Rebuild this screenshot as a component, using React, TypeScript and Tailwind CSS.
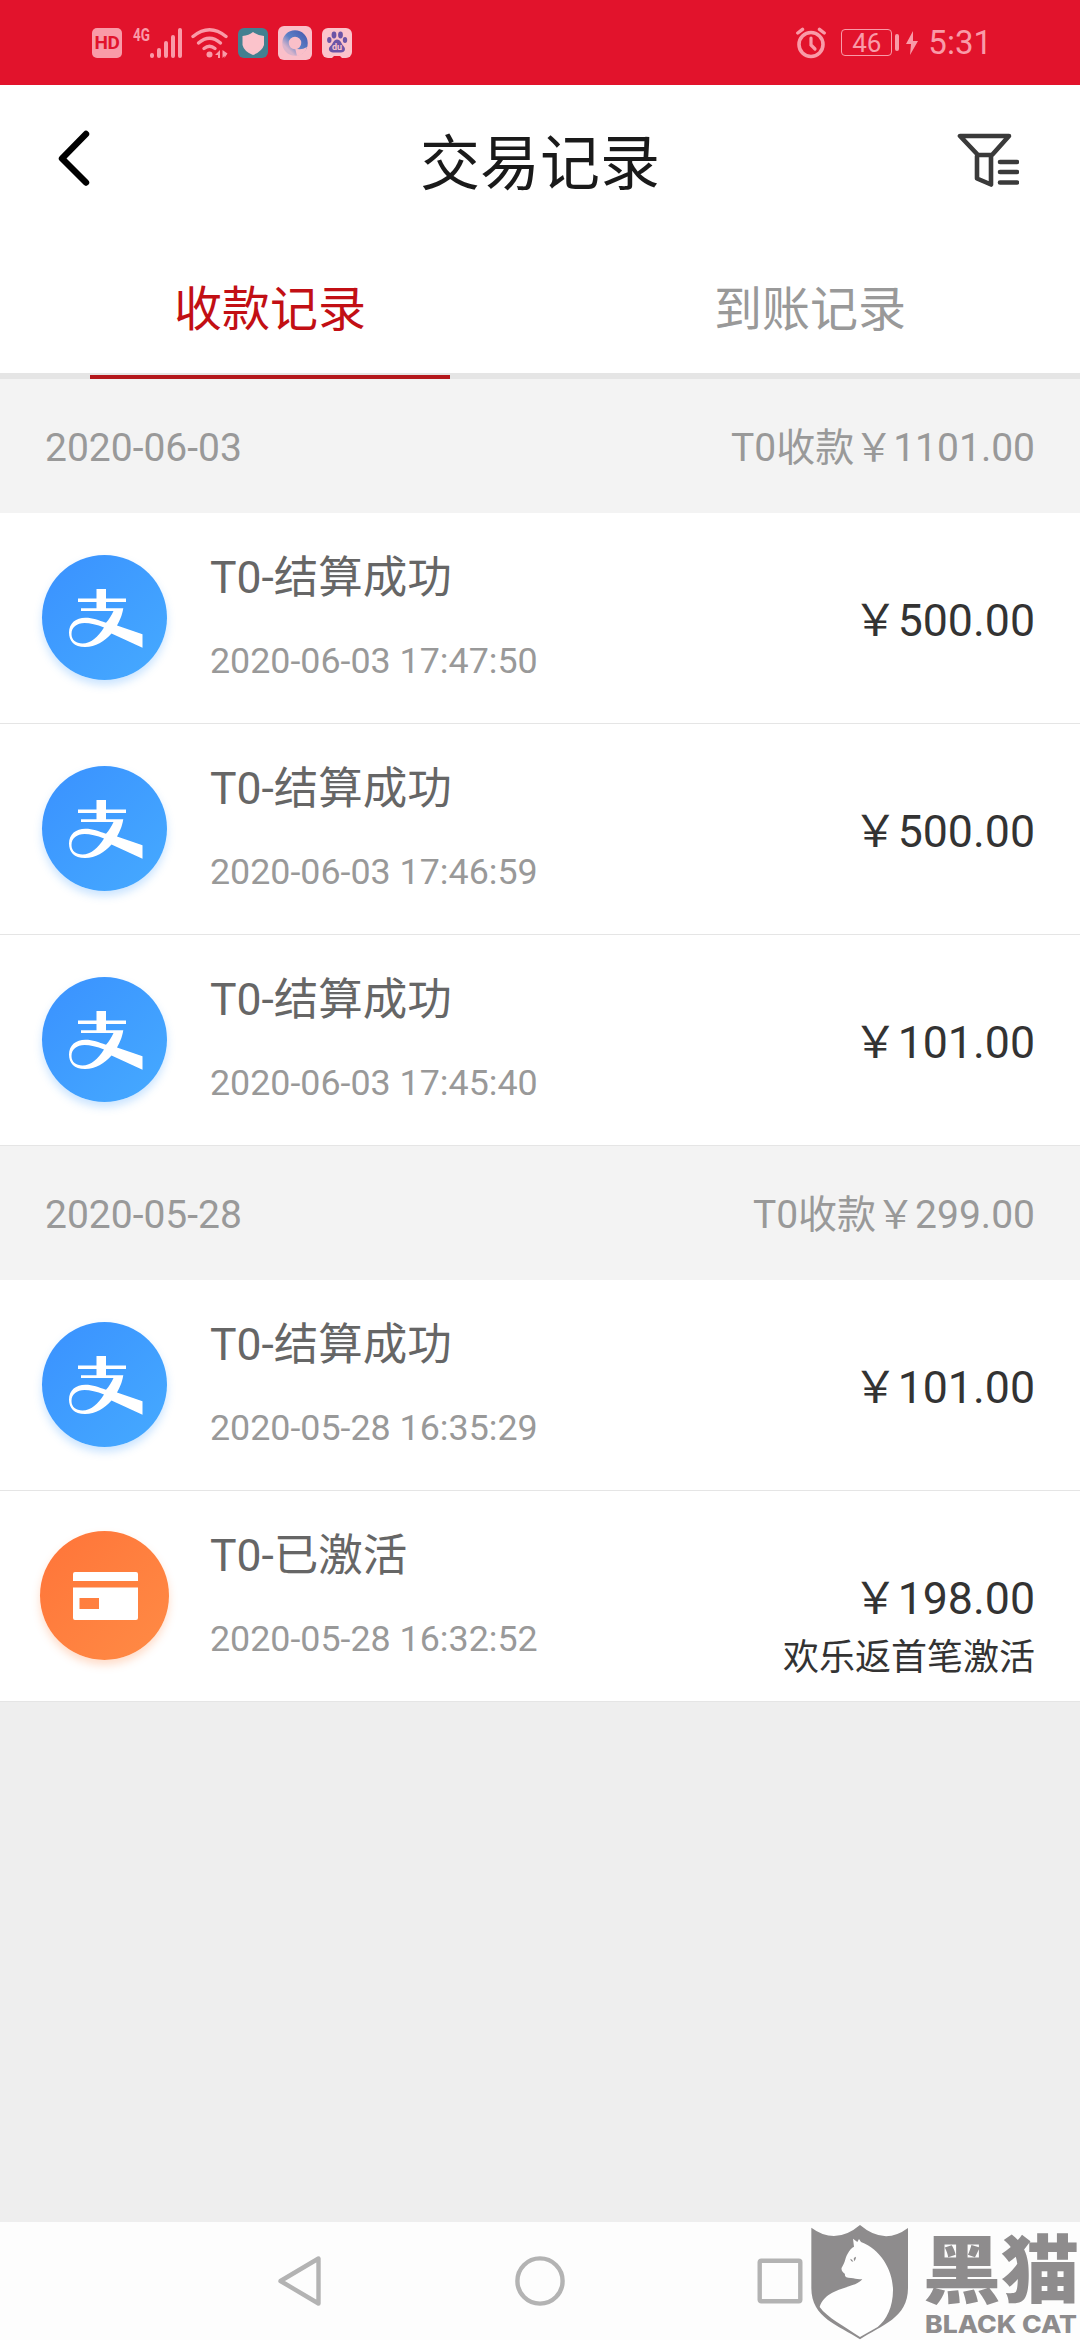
import React, { useState } from 'react';

type Channel = 'alipay' | 'card';

interface TradeRecord {
  channel: Channel;
  title: string;
  time: string;
  amount: string;
  note?: string;
}

interface DayGroup {
  date: string;
  total: string;
  records: TradeRecord[];
}

const TABS = ['收款记录', '到账记录'];

const GROUPS: DayGroup[] = [
  {
    date: '2020-06-03',
    total: 'T0收款￥1101.00',
    records: [
      { channel: 'alipay', title: 'T0-结算成功', time: '2020-06-03 17:47:50', amount: '￥500.00' },
      { channel: 'alipay', title: 'T0-结算成功', time: '2020-06-03 17:46:59', amount: '￥500.00' },
      { channel: 'alipay', title: 'T0-结算成功', time: '2020-06-03 17:45:40', amount: '￥101.00' },
    ],
  },
  {
    date: '2020-05-28',
    total: 'T0收款￥299.00',
    records: [
      { channel: 'alipay', title: 'T0-结算成功', time: '2020-05-28 16:35:29', amount: '￥101.00' },
      { channel: 'card', title: 'T0-已激活', time: '2020-05-28 16:32:52', amount: '￥198.00', note: '欢乐返首笔激活' },
    ],
  },
];

const SignalIcons = () => (
  <div className="flex items-center">
    <div className="flex h-[30px] w-[30px] items-center justify-center rounded-[5px] bg-[#f99ba8] text-[19px] font-bold leading-none tracking-tight text-[#e2132c]">
      HD
    </div>
    <svg className="ml-[11px]" width="50" height="40" viewBox="0 -3 50 40">
      <text x="0" y="15" fontSize="18" fontWeight="700" textLength="17" lengthAdjust="spacingAndGlyphs" fill="#f99ba8">4G</text>
      <g stroke="#f99ba8" strokeWidth="4" strokeLinecap="round">
        <path d="M19 29v1M26 24v6M33 17v13M40 11v19M47 4v26" />
      </g>
    </svg>
    <svg className="ml-[8px]" width="38" height="34" viewBox="0 0 38 34">
      <g fill="none" stroke="#f99ba8" strokeWidth="3.4" strokeLinecap="round">
        <path d="M2 10.500Q18.500 -3 35 10.500" />
        <path d="M7.500 17Q18.500 7.500 29.500 17" />
        <path d="M13 22.500Q18.500 18 24 22.500" />
      </g>
      <circle cx="18.500" cy="28.500" r="3" fill="#f99ba8" />
      <path d="M29 24v8h-2v-3h-3zM31.500 32v-8l5 3.500-3 4.500v-2z" fill="#f99ba8" />
    </svg>
    <svg className="ml-[9px]" width="30" height="30" viewBox="0 0 30 30">
      <rect width="30" height="30" rx="6" fill="#438090" />
      <path d="M15 4Q20 7.500 26 8v9q-2 6.500-11 10Q6 23.500 4.500 17V8Q11 7.500 15 4z" fill="#fbc3cb" />
    </svg>
    <svg className="ml-[10px]" width="34" height="34" viewBox="0 0 34 34">
      <defs>
        <linearGradient id="ring" x1="0" y1="1" x2="1" y2="0">
          <stop offset="0.15" stopColor="#d9b4cb" />
          <stop offset="0.5" stopColor="#5c80c6" />
          <stop offset="1" stopColor="#4a5fb2" />
        </linearGradient>
      </defs>
      <rect width="34" height="34" rx="6" fill="#fabfc9" />
      <circle cx="17" cy="17" r="9.500" fill="none" stroke="url(#ring)" strokeWidth="6.500" />
      <path d="M17 22q5 3 12-1-2 8-10 9z" fill="#fabfc9" />
    </svg>
    <svg className="ml-[10px]" width="30" height="30" viewBox="0 0 30 30">
      <rect width="30" height="30" rx="6" fill="#fbc3cb" />
      <g fill="#6c54a6">
        <ellipse cx="12" cy="7" rx="2.400" ry="3.400" />
        <ellipse cx="18.500" cy="7" rx="2.400" ry="3.400" />
        <ellipse cx="7.300" cy="12" rx="2.200" ry="3" />
        <ellipse cx="23" cy="12" rx="2.200" ry="3" />
        <path d="M15 11.500c4 0 4 4 6.500 6.500 3 3 1 6.500-2.500 6.500h-8c-4 0-5.500-4-2.500-6.500C11 16 11.500 11.500 15 11.500z" />
      </g>
      <text x="15" y="22" fontSize="9" fontWeight="700" textAnchor="middle" fill="#fbc3cb">du</text>
      <path d="M10 30l2-2h6l2 2z" fill="#e2132c" />
    </svg>
  </div>
);

const BatteryAndClock = () => (
  <div className="flex items-center text-[#f99ba8]">
    <svg width="30" height="32" viewBox="0 0 30 32" fill="none" stroke="currentColor" strokeLinecap="round">
      <circle cx="15" cy="17.500" r="12" strokeWidth="3.600" />
      <path d="M15 11v7l4 4" strokeWidth="3.200" />
      <path d="M1.800 6l4.700-3.600M28.200 6l-4.700-3.600" strokeWidth="3.400" />
    </svg>
    <div className="ml-[15px] flex h-[27px] w-[51px] items-center justify-center rounded-[4px] border border-current text-[26px] leading-none">
      46
    </div>
    <div className="ml-[3px] h-[17px] w-[4px] rounded-full bg-current" />
    <svg className="ml-[7px]" width="12" height="24" viewBox="0 0 12 24">
      <path d="M7 0L0 13h5l-1 11 8-14H7z" fill="currentColor" />
    </svg>
    <span className="ml-[10px] text-[33px] leading-none">5:31</span>
  </div>
);

const BackIcon = () => (
  <svg width="36" height="60" viewBox="0 0 36 60" fill="none" stroke="#000" strokeWidth="6.400" strokeLinecap="round" strokeLinejoin="round">
    <path d="M31 5L7 29.500l24 24" />
  </svg>
);

const FilterIcon = () => (
  <svg width="62" height="56" viewBox="0 0 62 56" fill="none" stroke="#3a3a3a" strokeWidth="4.600" strokeLinecap="round" strokeLinejoin="round">
    <path d="M3 5h49L35 24H21zM20 25v22.500l14 6V25" />
    <path d="M43 31h17M43 41h17M43 51.500h17" />
  </svg>
);

const AlipayIcon = () => (
  <div className="h-[125px] w-[125px] rounded-full bg-linear-to-br from-[#3a91ff] to-[#46aaff] shadow-[0_5px_9px_rgba(64,158,255,0.28)]">
    <svg width="125" height="125" viewBox="0 0 125 125" fill="#fff">
      <path d="M54.500 34H64v9.500h20V47H64v6.300h17.300C80 61 77.500 66 75 70.500l25.500 8.800v13.400L69.500 78.500C62 86.500 54 92 43 92 32 92 27 86 27 77.500 27 68 34 62.700 43.400 62.700c7.600 0 13 2.500 20.600 5 3-3.200 5.500-7.200 7.500-11.700H39v-2.700h15.500V47H36v-3.500h18.500zM62 72.500C55 69.500 48 68 42.500 68 35 68 29.500 72 29.500 79c0 6 4.500 9.500 11 9.500C49 88.500 56 82 62 72.500z" fillRule="evenodd" />
    </svg>
  </div>
);

const CardIcon = () => (
  <div className="h-[129px] w-[129px] rounded-full bg-linear-to-br from-[#ff7439] to-[#ff8b45] shadow-[0_5px_9px_rgba(255,128,60,0.28)]">
    <svg width="129" height="129" viewBox="0 0 129 129">
      <path d="M35 41h61q2 0 2 2v7H33v-7q0-2 2-2zM33 56.500h65V87q0 2-2 2H35q-2 0-2-2zM39.500 67v11H59V67z" fill="#fff" fillRule="evenodd" />
    </svg>
  </div>
);

const RecordRow: React.FC<{ record: TradeRecord }> = ({ record }) => (
  <li className="flex h-[211px] border-b border-[#e5e5e5] bg-white pl-10 pr-[45px]">
    <div className="flex w-[130px] items-center justify-center pb-[2px] pr-[1px]">
      {record.channel === 'alipay' ? <AlipayIcon /> : <CardIcon />}
    </div>
    <div className="ml-10 flex flex-1 flex-col pt-[35px]">
      <span className="text-[44.5px] leading-[60px] text-[#666]">{record.title}</span>
      <span className="mt-[26px] text-[35.8px] leading-[54px] text-[#999]">{record.time}</span>
    </div>
    <div className="flex flex-col items-end pt-[78px] text-[#333]">
      <span className="text-[44.7px] leading-[60px]">{record.amount}</span>
      {record.note && <span className="mt-[2px] text-[36px] leading-[54px]">{record.note}</span>}
    </div>
  </li>
);

const BlackCatMark = () => (
  <svg className="absolute bottom-0 right-0" width="300" height="140" viewBox="0 0 900 420">
    <path d="M94 83Q167 137 240 75q73 62 144 9v180c0 90-80 112-144 154C176 376 94 354 94 264z" fill="#8e8c8d" />
    <path
      d="M219 116l13 10 5-9 6 9c60 22 96 86 96 145 0 50-20 90-46 110l-53 30c-50-34-98-58-121-90 20-62 110-55 128-84-14 3-22-3-34-3-14 0-20-4-18-12-8-5-12-13-10-19 12-18 10-30 18-42 6-12 12-17 19-21z"
      fill="#fefefe"
    />
    <path d="M211 176q6 2 9 9-8 0-9-9zM221 176q1-5 7-6 0 9-5 14z" fill="#8e8c8d" />
    <g fill="#8e8c8d">
      <text x="428" y="290" fontSize="222" fontWeight="900" textLength="470" lengthAdjust="spacingAndGlyphs" style={{ fontFamily: '"Noto Sans CJK SC", sans-serif' }}>
        黑猫
      </text>
      <text x="435" y="398" fontSize="71" fontWeight="800" textLength="456" lengthAdjust="spacingAndGlyphs" style={{ fontFamily: 'Inter, sans-serif' }}>
        BLACK CAT
      </text>
    </g>
  </svg>
);

const App: React.FC = () => {
  const [activeTab, setActiveTab] = useState(0);

  return (
    <div className="relative flex h-[2340px] w-[1080px] flex-col overflow-hidden bg-[#eee] font-[Roboto,'Noto_Sans_CJK_SC',sans-serif]">
      {/* Status bar */}
      <div className="flex h-[85px] shrink-0 items-center justify-between bg-[#e2132c] pl-[92px] pr-[88px]">
        <SignalIcons />
        <BatteryAndClock />
      </div>

      {/* Header */}
      <header className="flex h-[156px] shrink-0 items-center justify-between bg-white pl-[55px] pr-[61px]">
        <button className="w-[68px] pb-[8px]">
          <BackIcon />
        </button>
        <h1 className="pt-[4px] text-[60px] leading-none text-[#1a1a1a]">交易记录</h1>
        <button className="pb-[8px]">
          <FilterIcon />
        </button>
      </header>

      {/* Tabs */}
      <nav className="flex h-[138px] shrink-0 border-b-[6px] border-[#e5e5e5] bg-white">
        {TABS.map((tab, i) => (
          <button
            key={tab}
            onClick={() => setActiveTab(i)}
            className={
              i === activeTab
                ? 'relative h-[132px] flex-1 pt-[5px] text-[48px] text-[#c20f14]'
                : 'relative h-[132px] flex-1 pt-[5px] text-[48px] text-[#999]'
            }
          >
            {tab}
            {i === activeTab && <span className="absolute -bottom-[6px] left-[90px] h-1 w-[360px] bg-[#b4181c]" />}
          </button>
        ))}
      </nav>

      {/* Records */}
      <main className="flex-1">
        {GROUPS.map((group) => (
          <section key={group.date}>
            <div className="flex h-[134px] items-center justify-between bg-[#f3f3f3] px-[45px] pt-[5px] text-[39px] text-[#999]">
              <span>{group.date}</span>
              <span>{group.total}</span>
            </div>
            <ul>
              {group.records.map((record) => (
                <RecordRow key={record.time} record={record} />
              ))}
            </ul>
          </section>
        ))}
      </main>

      {/* System navigation */}
      <footer className="flex h-[118px] shrink-0 items-center justify-center gap-[190px] bg-[#fdfdfd]">
        <svg width="50" height="50" viewBox="0 0 50 50" fill="none" stroke="#b3b3b3" strokeWidth="4.400" strokeLinejoin="round">
          <path d="M43.500 2.500v45L5.500 25z" />
        </svg>
        <svg width="50" height="50" viewBox="0 0 50 50" fill="none" stroke="#b3b3b3" strokeWidth="4.400">
          <circle cx="25" cy="25" r="22.600" />
        </svg>
        <svg width="50" height="50" viewBox="0 0 50 50" fill="none" stroke="#b3b3b3" strokeWidth="4.400">
          <rect x="4.700" y="4.700" width="40.600" height="40.600" rx="1.500" />
        </svg>
      </footer>

      <BlackCatMark />
    </div>
  );
};

export default App;
